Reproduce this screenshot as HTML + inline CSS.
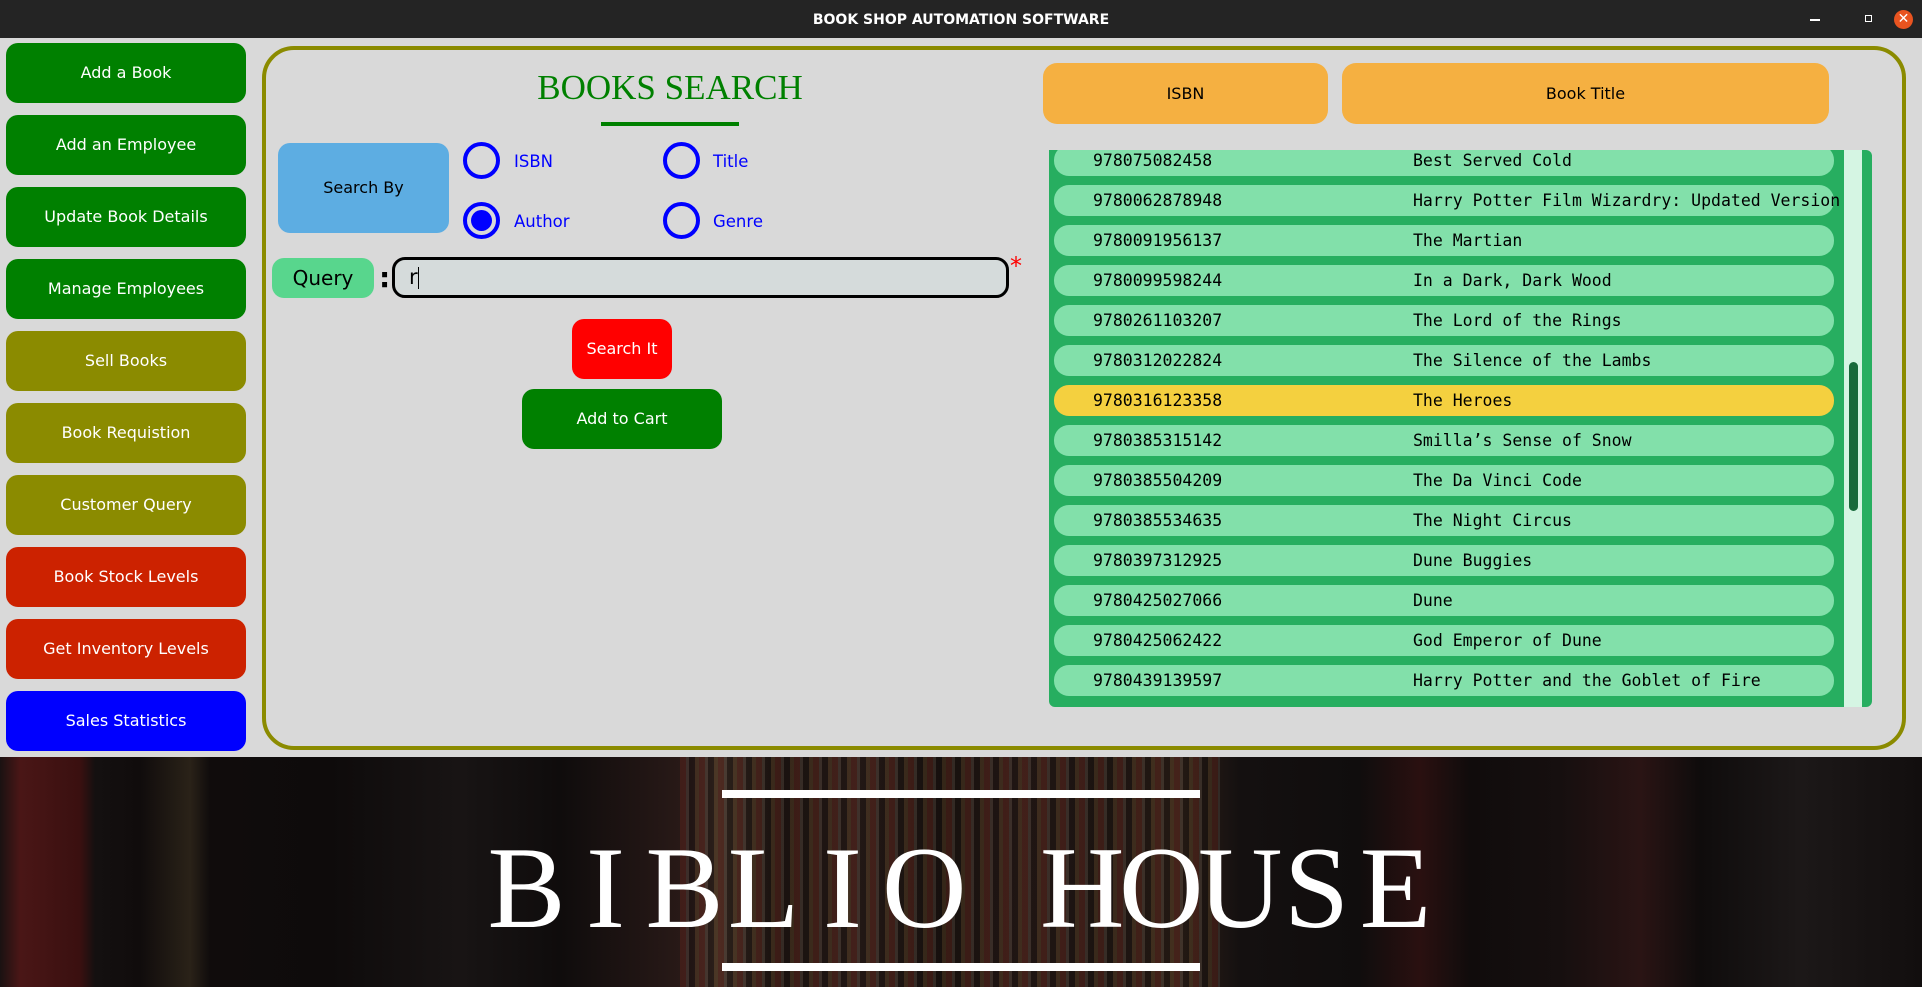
<!DOCTYPE html>
<html><head><meta charset="utf-8"><style>
*{margin:0;padding:0;box-sizing:border-box}
body{width:1922px;height:987px;overflow:hidden;background:#d9d9d9;position:relative;font-family:"DejaVu Sans","Liberation Sans",sans-serif}
.a{position:absolute}
.tb{left:0;top:0;width:1922px;height:38px;background:#242424;color:#fff;font-weight:bold;font-size:14px;text-align:center;line-height:40px}
.sb{left:6px;width:240px;height:60px;border-radius:12px;color:#fff;font-size:16px;text-align:center;line-height:60px}
.g{background:#008000}.o{background:#8b8b00}.r{background:#cc2200}.b{background:#0000ff}
.rad{width:37px;height:37px;border:4px solid #0000ff;border-radius:50%}
.rl{color:#0000ff;font-size:16.5px}
.row{left:1054px;width:780px;height:31px;border-radius:15px;background:#82e0aa;font-family:"DejaVu Sans Mono","Liberation Mono",monospace;font-size:16.5px;color:#000;line-height:31px;white-space:nowrap}
.row span{position:absolute}
.bh span{display:inline-block;width:79px;text-align:center}
</style></head><body>
<div class="a tb">BOOK SHOP AUTOMATION SOFTWARE</div>
<div class="a" style="left:1810px;top:19px;width:10px;height:2px;background:#fff"></div>
<div class="a" style="left:1865px;top:15px;width:7px;height:7px;border:1.5px solid #fff"></div>
<div class="a" style="left:1894px;top:10px;width:19px;height:19px;border-radius:50%;background:#e95420;color:#fff;font-size:14px;line-height:19px;text-align:center;font-weight:bold">✕</div>

<div class="a sb g" style="top:43px">Add a Book</div>
<div class="a sb g" style="top:115px">Add an Employee</div>
<div class="a sb g" style="top:187px">Update Book Details</div>
<div class="a sb g" style="top:259px">Manage Employees</div>
<div class="a sb o" style="top:331px">Sell Books</div>
<div class="a sb o" style="top:403px">Book Requistion</div>
<div class="a sb o" style="top:475px">Customer Query</div>
<div class="a sb r" style="top:547px">Book Stock Levels</div>
<div class="a sb r" style="top:619px">Get Inventory Levels</div>
<div class="a sb b" style="top:691px">Sales Statistics</div>

<div class="a" style="left:262px;top:46px;width:1644px;height:704px;border:4px solid #8b8b00;border-radius:32px"></div>
<div class="a" style="left:470px;top:68px;width:400px;text-align:center;font-family:'Liberation Serif',serif;font-size:35px;color:#008000">BOOKS SEARCH</div>
<div class="a" style="left:601px;top:122px;width:138px;height:4px;background:#008000"></div>

<div class="a" style="left:278px;top:143px;width:171px;height:90px;background:#5dade2;border-radius:12px;text-align:center;line-height:90px;font-size:16px">Search By</div>
<div class="a rad" style="left:463px;top:142px"></div><div class="a rl" style="left:514px;top:152px">ISBN</div>
<div class="a rad" style="left:663px;top:142px"></div><div class="a rl" style="left:713px;top:152px">Title</div>
<div class="a rad" style="left:463px;top:202px"></div><div class="a" style="left:471px;top:210px;width:21px;height:21px;border-radius:50%;background:#0000ff"></div><div class="a rl" style="left:514px;top:212px">Author</div>
<div class="a rad" style="left:663px;top:202px"></div><div class="a rl" style="left:713px;top:212px">Genre</div>

<div class="a" style="left:272px;top:258px;width:102px;height:40px;background:#58d68d;border-radius:12px;text-align:center;line-height:40px;font-size:20px">Query</div>
<div class="a" style="left:379px;top:258px;font-size:28px;font-weight:bold;line-height:40px">:</div>
<div class="a" style="left:392px;top:257px;width:617px;height:41px;border:3px solid #000;border-radius:13px;background:#d5dbdb;font-size:21px;line-height:35px;padding-left:14px">r<span style="display:inline-block;width:1px;height:22px;background:#000;vertical-align:middle"></span></div>
<div class="a" style="left:1010px;top:252px;color:#f00;font-size:24px">*</div>

<div class="a" style="left:572px;top:319px;width:100px;height:60px;background:#f00;border-radius:12px;color:#fff;text-align:center;line-height:60px;font-size:16px">Search It</div>
<div class="a" style="left:522px;top:389px;width:200px;height:60px;background:#008000;border-radius:12px;color:#fff;text-align:center;line-height:60px;font-size:16px">Add to Cart</div>

<div class="a" style="left:1043px;top:63px;width:285px;height:61px;background:#f5b041;border-radius:14px;text-align:center;line-height:61px;font-size:16px">ISBN</div>
<div class="a" style="left:1342px;top:63px;width:487px;height:61px;background:#f5b041;border-radius:14px;text-align:center;line-height:61px;font-size:16px">Book Title</div>

<div class="a" style="left:1049px;top:150px;width:823px;height:557px;background:#27ae60;overflow:hidden;border-radius:0 6px 6px 6px">
<div class="a" style="left:795px;top:0;width:18px;height:557px;background:#d5f5e3"></div>
<div class="a" style="left:800px;top:212px;width:9px;height:149px;background:#186a3b;border-radius:5px"></div>
</div>
<div class="a" style="left:1049px;top:150px;width:795px;height:557px;overflow:hidden">
<div id="rows"></div>
</div>
<script>
var d=[["978075082458","Best Served Cold"],["9780062878948","Harry Potter Film Wizardry: Updated Version"],["9780091956137","The Martian"],["9780099598244","In a Dark, Dark Wood"],["9780261103207","The Lord of the Rings"],["9780312022824","The Silence of the Lambs"],["9780316123358","The Heroes"],["9780385315142","Smilla’s Sense of Snow"],["9780385504209","The Da Vinci Code"],["9780385534635","The Night Circus"],["9780397312925","Dune Buggies"],["9780425027066","Dune"],["9780425062422","God Emperor of Dune"],["9780439139597","Harry Potter and the Goblet of Fire"]];
var h="";d.forEach(function(r,i){h+='<div class="a row" style="left:5px;top:'+(-5+40*i)+'px;'+(i==6?'background:#f4d03f':'')+'"><span style="left:39px">'+r[0]+'</span><span style="left:359px">'+r[1]+'</span></div>';});
document.getElementById("rows").innerHTML=h;
</script>

<div class="a" style="left:0;top:757px;width:1922px;height:230px;overflow:hidden;background:
linear-gradient(90deg,#1a1212 0,#4a1616 20px,#3a1010 80px,#141010 95px,#100c0c 140px,#2a2218 190px,#100c0c 210px,#0e0b0b 330px,#181414 460px,#0f0c0c 560px,#2a1a18 690px,#3a2a22 720px,#201612 780px,#2c1e1a 860px,#1c1410 940px,#2a1c18 1020px,#221814 1100px,#2e2018 1180px,#141010 1240px,#100d0d 1360px,#2a1010 1420px,#100c0c 1470px,#160f0f 1560px,#2a1414 1640px,#0f0c0c 1700px,#1c1818 1800px,#120e0e 1922px)">
<div class="a" style="left:680px;top:0;width:540px;height:230px;background:repeating-linear-gradient(90deg,rgba(120,40,30,.3) 0 6px,rgba(200,190,170,.12) 6px 9px,rgba(10,8,8,.3) 9px 15px,rgba(160,120,60,.18) 15px 19px)"></div>
<div class="a" style="left:722px;top:33px;width:478px;height:8px;background:#fff"></div>
<div class="a" style="left:722px;top:206px;width:478px;height:8px;background:#fff"></div>
<div class="a bh" style="left:487px;top:62px;width:960px;white-space:nowrap;color:#fff;font-family:'Liberation Serif',serif;font-size:117px;line-height:140px"><span>B</span><span>I</span><span>B</span><span>L</span><span>I</span><span>O</span><span> </span><span>H</span><span>O</span><span>U</span><span>S</span><span>E</span></div>
</div>
</body></html>
